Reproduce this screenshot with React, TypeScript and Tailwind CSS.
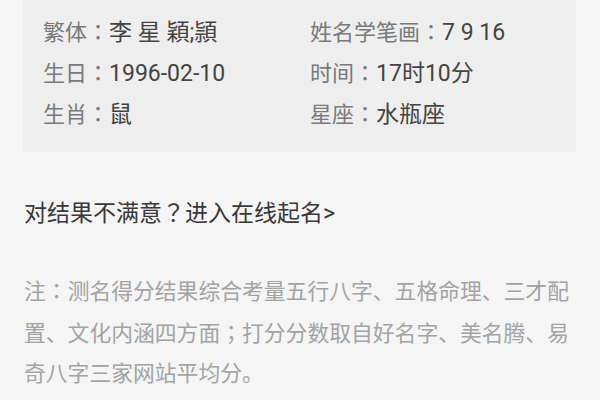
import React from 'react'

const font = { fontFamily: 'Roboto, "Noto Sans CJK SC", sans-serif' }

// centred full-width punctuation, as on the phone
function P({ c }: { c: string }) {
  return <span className="font-['Noto_Sans_CJK_JP',sans-serif]">{c}</span>
}

const rows: [string, string, string, string][] = [
  ['繁体', '李 星 穎;頴', '姓名学笔画', '7 9 16'],
  ['生日', '1996-02-10', '时间', '17时10分'],
  ['生肖', '鼠', '星座', '水瓶座'],
]

export default function App() {
  return (
    <div className="w-[600px] h-[400px] bg-[#f5f5f5] overflow-hidden" style={font}>
      <div className="ml-[23px] w-[553px] bg-[#eeeeee] pl-[20px] pt-[12px] pb-[17px]">
        {rows.map(r => (
          <div key={r[0]} className="flex h-[41px] items-center text-[22px]">
            <div className="w-[267px]">
              <span className="text-[#7a7a7a]">{r[0]}<P c="：" /></span>
              <span className="text-[#444444] text-[23px]">{r[1]}</span>
            </div>
            <div>
              <span className="text-[#7a7a7a]">{r[2]}<P c="：" /></span>
              <span className="text-[#444444] text-[23px]">{r[3]}</span>
            </div>
          </div>
        ))}
      </div>

      <div className="pl-[24px] mt-[41px] h-[40px] flex items-center text-[23px] text-[#383838]">
        <span>对结果不满意<P c="？" />进入在线起名&gt;</span>
      </div>

      <p className="pl-[24px] mt-[37px] w-[574px] text-[21.8px] leading-[40px] text-[#a3a3a3]">
        注<P c="：" />测名得分结果综合考量五行八字、五格命理、三才配置、文化内涵四方面<P c="；" />打分分数取自好名字、美名腾、易奇八字三家网站平均分。
      </p>
    </div>
  )
}
